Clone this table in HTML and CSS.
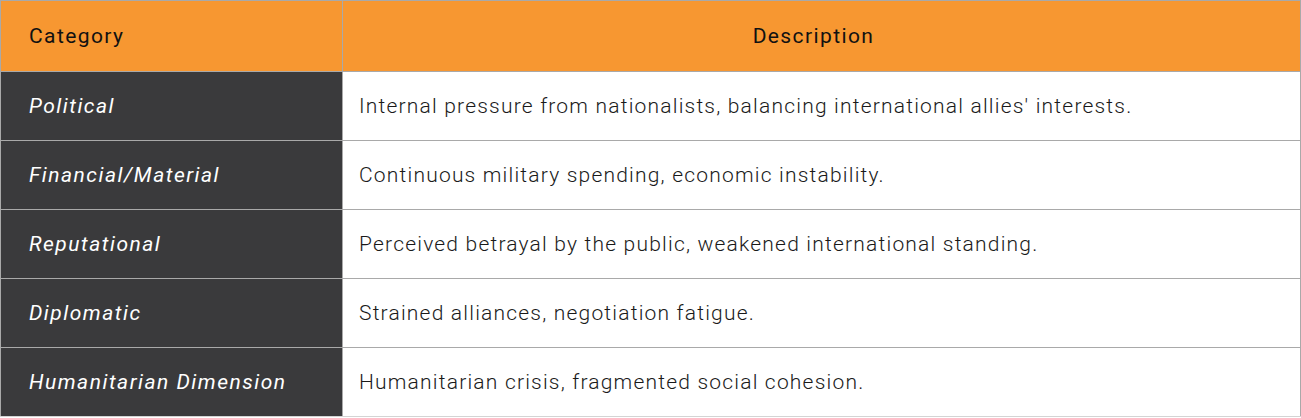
FILE: index.html
```html
<!DOCTYPE html>
<html>
<head>
<meta charset="utf-8">
<link rel="stylesheet" href="styles.css">
</head>
<body>
<table class="grid">
  <colgroup><col class="col-cat"><col class="col-desc"></colgroup>
  <thead>
    <tr><th class="h-cat">Category</th><th class="h-desc">Description</th></tr>
  </thead>
  <tbody>
    <tr><td class="cat">Political</td><td class="desc">Internal pressure from nationalists, balancing international allies' interests.</td></tr>
    <tr><td class="cat">Financial/Material</td><td class="desc">Continuous military spending, economic instability.</td></tr>
    <tr><td class="cat">Reputational</td><td class="desc">Perceived betrayal by the public, weakened international standing.</td></tr>
    <tr><td class="cat">Diplomatic</td><td class="desc">Strained alliances, negotiation fatigue.</td></tr>
    <tr class="last"><td class="cat">Humanitarian Dimension</td><td class="desc">Humanitarian crisis, fragmented social cohesion.</td></tr>
  </tbody>
</table>
</body>
</html>
```
FILE: styles.css
```css
html, body { margin: 0; padding: 0; background: #fff; }
body { font-family: Roboto, "Liberation Sans", sans-serif; overflow: hidden; }
.grid {
  width: 1301px;
  border-collapse: collapse;
  table-layout: fixed;
  font-size: 21px;
  letter-spacing: 1.2px;
}
.col-cat { width: 342px; }
.grid th, .grid td {
  border: 1px solid #a9a9a9;
  padding: 0;
  vertical-align: middle;
  text-align: left;
  white-space: nowrap;
}
.grid th {
  background: #f79731;
  color: #111;
  font-weight: 400;
  height: 70px;
}
.h-cat { padding-left: 28px !important; letter-spacing: 1.4px; }
.h-desc { text-align: center !important; padding-right: 16px !important; letter-spacing: 1.4px; }
.grid td { height: 68px; }
.cat {
  background: #3a3a3c;
  color: #fff;
  font-style: italic;
  padding-left: 28px !important;
  letter-spacing: 1.5px;
}
.desc {
  color: #1a1a1a;
  font-weight: 300;
  padding-left: 16px !important;
}
.last td { border-bottom-color: #d4d4d4; }
```
